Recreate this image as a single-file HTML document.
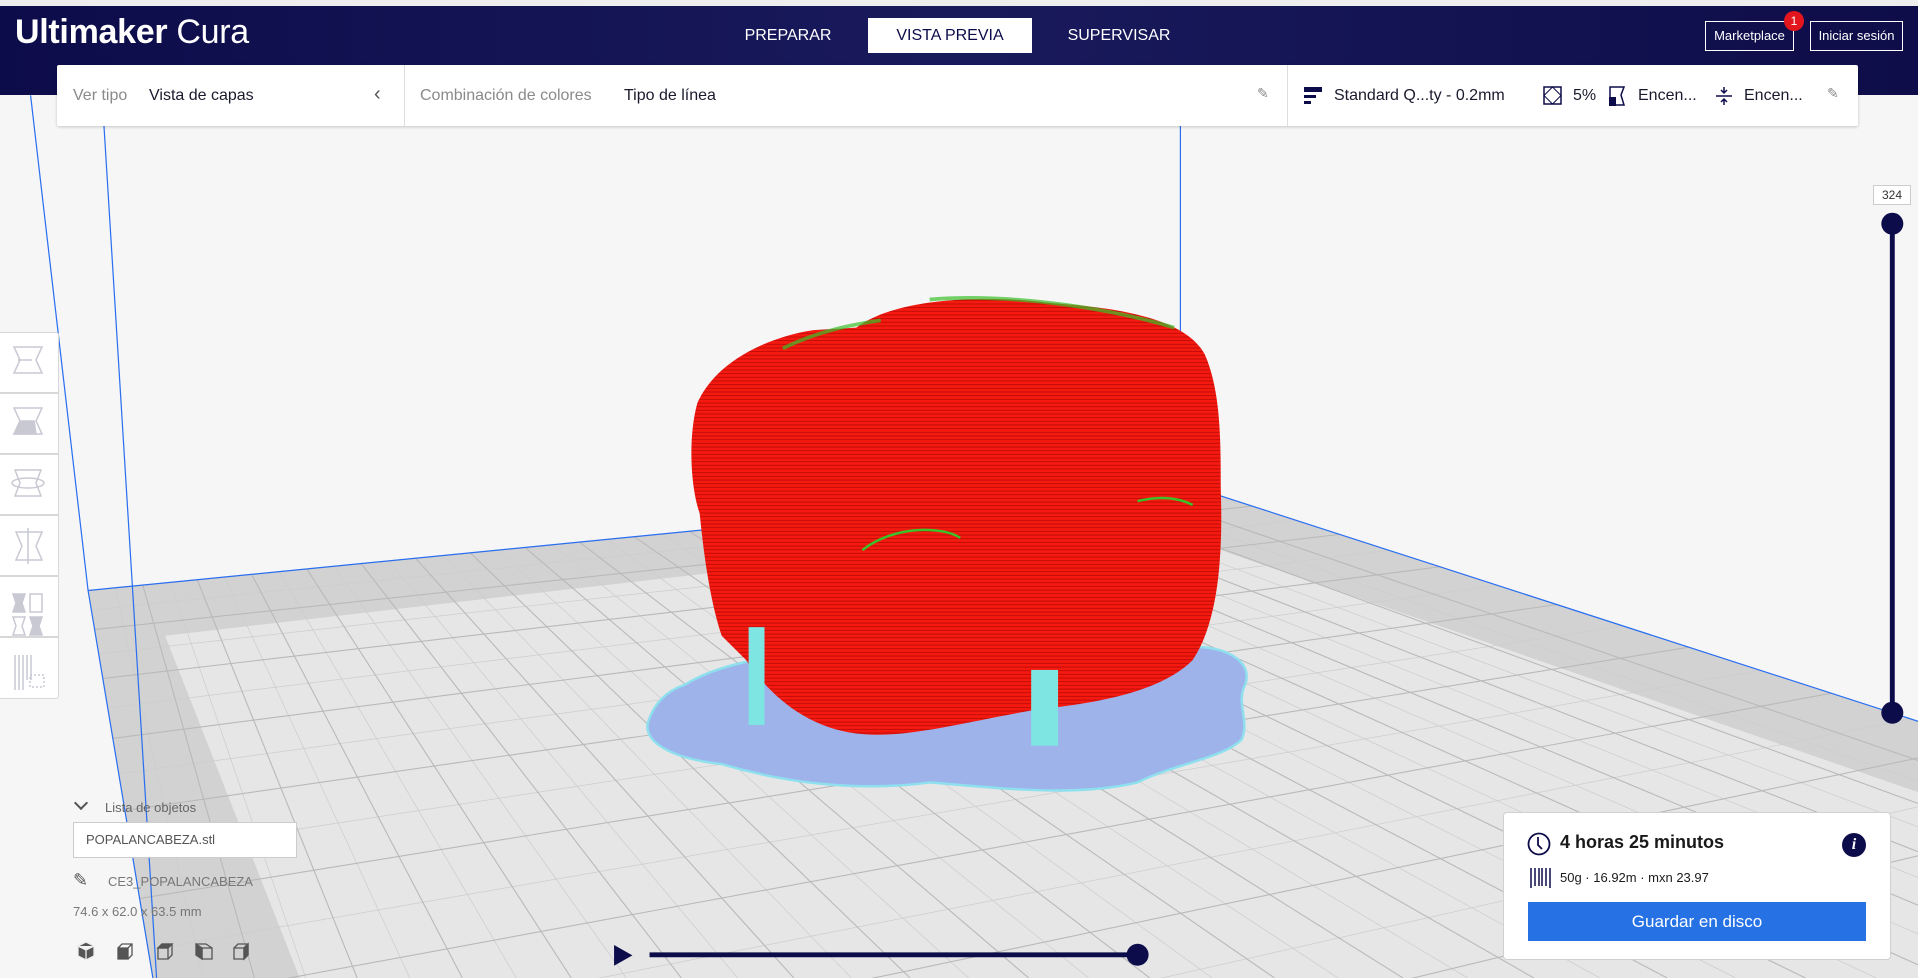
<!DOCTYPE html>
<html style="overflow:hidden;width:1918px;height:978px"><head><meta charset="utf-8"><style>
*{margin:0;padding:0;box-sizing:border-box}
body{width:1918px;height:978px;overflow:hidden;background:#f6f6f7;font-family:"Liberation Sans",sans-serif;position:relative}
.a{position:absolute}
.hdr{left:0;top:6px;width:1918px;height:89px;background:linear-gradient(90deg,#0d0c4a,#191a5c 50%,#0e0d49)}
.tab{color:#fff;font-size:16px;top:18px;height:35px;line-height:35px;text-align:center}
.tb{left:57px;top:65px;width:1801px;height:61px;background:#fff;box-shadow:0 1px 3px rgba(0,0,0,.2);border-radius:2px}
.t{font-size:16px;color:#1a1a2e;top:87px;white-space:nowrap}
.g{color:#8a8a8a}
.lt{left:0;width:59px;height:61px;background:#fff;border:1px solid #d8d8d8;border-left:none}
</style></head><body>
<div class="a" style="left:0;top:0;width:1918px;height:6px;background:#eee"></div>
<div class="a hdr"></div>
<div class="a" style="left:15px;top:13px;color:#fff;font-size:34px;letter-spacing:-0.3px"><b style="font-weight:600">Ultimaker</b> <span style="font-weight:300">Cura</span></div>
<div class="a tab" style="left:740px;width:96px">PREPARAR</div>
<div class="a tab" style="left:868px;width:164px;background:#fff;color:#0d0c4a">VISTA PREVIA</div>
<div class="a tab" style="left:1062px;width:114px">SUPERVISAR</div>
<div class="a" style="left:1705px;top:21px;width:89px;height:30px;border:1px solid #fff;color:#fff;font-size:13px;line-height:28px;text-align:center">Marketplace</div>
<div class="a" style="left:1784px;top:11px;width:20px;height:20px;border-radius:50%;background:#e3161d;color:#fff;font-size:12px;line-height:20px;text-align:center">1</div>
<div class="a" style="left:1810px;top:21px;width:93px;height:30px;border:1px solid #fff;color:#fff;font-size:13px;line-height:28px;text-align:center">Iniciar sesión</div>

<svg class="a" style="left:0;top:0" width="1918" height="978" viewBox="0 0 1568 800" preserveAspectRatio="none">
<defs><clipPath id="fl"><polygon points="72,483 965,395 2219,800 125,800"/></clipPath>
<pattern id="rl" width="4" height="3" patternUnits="userSpaceOnUse"><rect width="4" height="3" fill="#f5190f"/><rect y="2.3" width="4" height="0.7" fill="#b80c08"/></pattern></defs>
<polygon points="72,483 965,395 2219,800 125,800" fill="#d2d2d2"/>
<polygon points="135,520 935,428 1568,648 1568,800 245,800" fill="#e6e6e6"/>
<g clip-path="url(#fl)" stroke="#cdcdcd" stroke-width="0.6" fill="none">
<path d="M5,85L166,800M5,85L250,800M5,85L335,800M5,85L422,800M5,85L512,800M5,85L603,800M5,85L696,800M5,85L792,800M5,85L890,800M5,85L991,800M5,85L1094,800M5,85L1200,800M5,85L1308,800M5,85L1419,800M5,85L1534,800M5,85L1651,800M5,85L1771,800M5,85L1895,800M5,85L2022,800"/>
<path d="M74,499L1568,346M80,535L1568,369M88,579L1568,397M97,633L1568,432M108,699L1568,475M121,777L1568,526M136,870L1568,587M155,980L1568,660"/>
</g>
<g clip-path="url(#fl)" stroke="#b9b9b9" stroke-width="0.9" fill="none">
<path d="M5,85L125,800M5,85L208,800M5,85L292,800M5,85L378,800M5,85L467,800M5,85L557,800M5,85L649,800M5,85L744,800M5,85L841,800M5,85L940,800M5,85L1042,800M5,85L1147,800M5,85L1254,800M5,85L1363,800M5,85L1476,800M5,85L1592,800M5,85L1710,800M5,85L1832,800M5,85L1958,800M5,85L2086,800"/>
<path d="M72,483L1568,336M77,515L1568,356M84,555L1568,382M92,604L1568,413M102,663L1568,452M114,735L1568,499M128,820L1568,554M145,920L1568,620M165,1040L1568,700M192,1200L1568,809"/>
</g>
<g stroke="#2a6ff0" stroke-width="1" fill="none">
<path d="M25,78L72,483L125,800M85,103L128,800M965,103L965,395M72,483L965,395L1568,590"/>
</g>
<path d="M560,560C600,535 680,530 720,535L960,530C1000,525 1025,540 1018,560C1010,575 1022,590 1015,605C1000,620 960,625 930,640C880,652 820,645 760,640C700,648 640,640 590,625C545,620 525,605 530,590C535,575 545,565 560,560Z" fill="#9db3ea" stroke="#8fe0ef" stroke-width="2"/>
<path d="M700,268C730,245 800,240 860,248C920,252 970,262 985,290C998,320 998,360 998,400C1000,460 995,510 975,540C950,565 900,575 850,580C790,590 740,605 700,600C660,595 630,570 610,540L590,520C580,490 575,450 572,420C565,400 562,360 570,330C585,295 630,275 665,270Z" fill="url(#rl)"/>
<path d="M640,285C670,270 700,265 720,262M760,245C820,240 900,250 960,268" stroke="#3bc12a" stroke-width="3" fill="none" opacity=".7"/>
<path d="M705,450C730,430 770,430 785,440M930,410C950,405 965,408 975,413" stroke="#3bc12a" stroke-width="2" fill="none"/>
<rect x="612" y="513" width="13" height="80" fill="#7fe5e3"/>
<rect x="843" y="548" width="22" height="62" fill="#7fe5e3"/>
<line x1="1547" y1="183" x2="1547" y2="583" stroke="#0d0c4a" stroke-width="4"/>
<circle cx="1547" cy="183" r="9" fill="#0d0c4a"/><circle cx="1547" cy="583" r="9" fill="#0d0c4a"/>
<line x1="531" y1="781" x2="930" y2="781" stroke="#0d0c4a" stroke-width="4"/>
<circle cx="930" cy="781" r="9" fill="#0d0c4a"/>
<polygon points="502,773 502,790 517,781.5" fill="#0d0c4a"/>
</svg>

<div class="a tb"></div>
<div class="a" style="left:404px;top:65px;width:1px;height:61px;background:#ddd"></div>
<div class="a" style="left:1287px;top:65px;width:1px;height:61px;background:#ddd"></div>
<div class="a t g" style="left:73px">Ver tipo</div>
<div class="a t" style="left:149px">Vista de capas</div>
<div class="a t" style="left:374px;top:83px;font-size:20px;color:#555">‹</div>
<div class="a t g" style="left:420px">Combinación de colores</div>
<div class="a t" style="left:624px">Tipo de línea</div>
<div class="a t g" style="left:1257px;top:85px;font-size:14px">✎</div>
<svg class="a" style="left:1303px;top:85px" width="22" height="22"><rect x="1" y="2" width="18" height="5" fill="#0d0c4a"/><rect x="1" y="10" width="12" height="3" fill="#0d0c4a"/><rect x="1" y="16" width="7" height="3" fill="#0d0c4a"/></svg>
<div class="a t" style="left:1334px">Standard Q...ty - 0.2mm</div>
<svg class="a" style="left:1543px;top:86px" width="20" height="20"><rect x="1" y="1" width="17" height="17" fill="none" stroke="#0d0c4a" stroke-width="1.5"/><path d="M1,9.5L9.5,1L18,9.5L9.5,18Z" fill="none" stroke="#0d0c4a"/></svg>
<div class="a t" style="left:1573px">5%</div>
<svg class="a" style="left:1607px;top:85px" width="20" height="22"><path d="M3,2H17L14,10L17,20H3Z" fill="none" stroke="#0d0c4a" stroke-width="1.5"/><path d="M2,12H9V21H2Z" fill="#0d0c4a"/></svg>
<div class="a t" style="left:1638px">Encen...</div>
<svg class="a" style="left:1715px;top:86px" width="18" height="20"><path d="M1,10H17M9,1V6M9,14V19M6,4L9,7L12,4M6,16L9,13L12,16" stroke="#0d0c4a" stroke-width="1.5" fill="none"/></svg>
<div class="a t" style="left:1744px">Encen...</div>
<div class="a t g" style="left:1827px;top:85px;font-size:14px">✎</div>

<div class="a lt" style="top:332px;border-top:1px solid #d8d8d8;border-radius:0 3px 0 0"></div>
<div class="a lt" style="top:393px"></div>
<div class="a lt" style="top:454px"></div>
<div class="a lt" style="top:515px"></div>
<div class="a lt" style="top:576px"></div>
<div class="a lt" style="top:637px;height:62px;border-radius:0 0 3px 0"></div>
<svg class="a" style="left:10px;top:340px" width="40" height="350" fill="none" stroke="#c9c9d3" stroke-width="1.5">
<path d="M4,7H32L26,20L32,33H4L10,20Z M8,20H22"/>
<path d="M4,68H32L26,81L32,94H4L10,81Z" /><path d="M4,94L10,81H24L26,94Z" fill="#c9c9d3"/>
<path d="M5,130H31L26,143L31,156H5L10,143Z"/><ellipse cx="18" cy="143" rx="16" ry="5"/>
<path d="M6,192H32L26,206L32,220H6L12,206Z"/><path d="M18,188V224"/>
<path d="M3,254H15L12,263L15,272H3L6,263Z" fill="#c9c9d3"/><path d="M20,254H32V272H20Z"/><path d="M3,277H15L12,286L15,295H3L6,286Z"/><path d="M20,277H32L29,286L32,295H20L23,286Z" fill="#c9c9d3"/>
<path d="M5,315V350M9,315V350M13,315V350M17,315V340M21,315V340"/><rect x="20" y="335" width="14" height="12" stroke-dasharray="2 2"/>
</svg>

<div class="a" style="left:76px;top:798px;width:10px;height:10px;border-right:2px solid #555;border-bottom:2px solid #555;transform:rotate(45deg)"></div>
<div class="a" style="left:105px;top:800px;font-size:13px;color:#666">Lista de objetos</div>
<div class="a" style="left:73px;top:822px;width:224px;height:36px;background:#fff;border:1px solid #ccc;font-size:13px;color:#555;line-height:34px;padding-left:12px">POPALANCABEZA.stl</div>
<div class="a" style="left:73px;top:870px;font-size:18px;color:#555">✎</div>
<div class="a" style="left:108px;top:874px;font-size:13px;color:#777">CE3_POPALANCABEZA</div>
<div class="a" style="left:73px;top:904px;font-size:13px;color:#777">74.6 x 62.0 x 63.5 mm</div>
<svg class="a" style="left:76px;top:940px" width="180" height="24" fill="none" stroke="#555" stroke-width="1.3">
<path d="M2,6L10,2L18,6V16L10,20L2,16Z M2,6L10,10L18,6M10,10V20" fill="#555" stroke="#eee"/>
<path d="M42,8H52V19H42Z" fill="#555"/><path d="M42,8L46,4H56V15L52,19M52,8L56,4"/>
<path d="M82,8H92V19H82Z"/><path d="M82,8L86,4H96V15L92,19M92,8L96,4" /><path d="M86,4H96L92,8H82Z" fill="#555"/>
<path d="M120,4L126,8V19L120,15Z" fill="#555"/><path d="M126,8H136V19H126ZM120,4H130L136,8"/>
<path d="M158,8H168V19H158Z M158,8L162,4H172V15L168,19M168,8L172,4"/><path d="M168,8L172,4V15L168,19Z" fill="#555"/>
</svg>

<div class="a" style="left:1873px;top:185px;width:38px;height:20px;background:#fff;border:1px solid #ccc;font-size:12px;color:#333;text-align:center;line-height:18px">324</div>

<div class="a" style="left:1503px;top:812px;width:388px;height:148px;background:#fff;border:1px solid #d0d0d0;border-radius:4px"></div>
<svg class="a" style="left:1527px;top:832px" width="24" height="24"><circle cx="12" cy="12" r="10.5" fill="none" stroke="#0d0c4a" stroke-width="1.8"/><path d="M11,5V13L15,17" stroke="#0d0c4a" stroke-width="1.8" fill="none"/></svg>
<div class="a" style="left:1560px;top:832px;font-size:18px;font-weight:bold;color:#1a1a1a">4 horas 25 minutos</div>
<div class="a" style="left:1842px;top:833px;width:24px;height:24px;border-radius:50%;background:#0d0c4a;color:#fff;font:bold italic 16px 'Liberation Serif',serif;text-align:center;line-height:24px">i</div>
<svg class="a" style="left:1530px;top:868px" width="22" height="20" stroke="#0d0c4a" stroke-width="1.5"><path d="M1,0V20M5,0V18M9,0V18M12,0V18M16,0V18M20,0V20"/></svg>
<div class="a" style="left:1560px;top:870px;font-size:13px;color:#1a1a1a">50g · 16.92m · mxn 23.97</div>
<div class="a" style="left:1528px;top:902px;width:338px;height:39px;background:#2671e4;color:#fff;font-size:17px;text-align:center;line-height:39px">Guardar en disco</div>
</body></html>
